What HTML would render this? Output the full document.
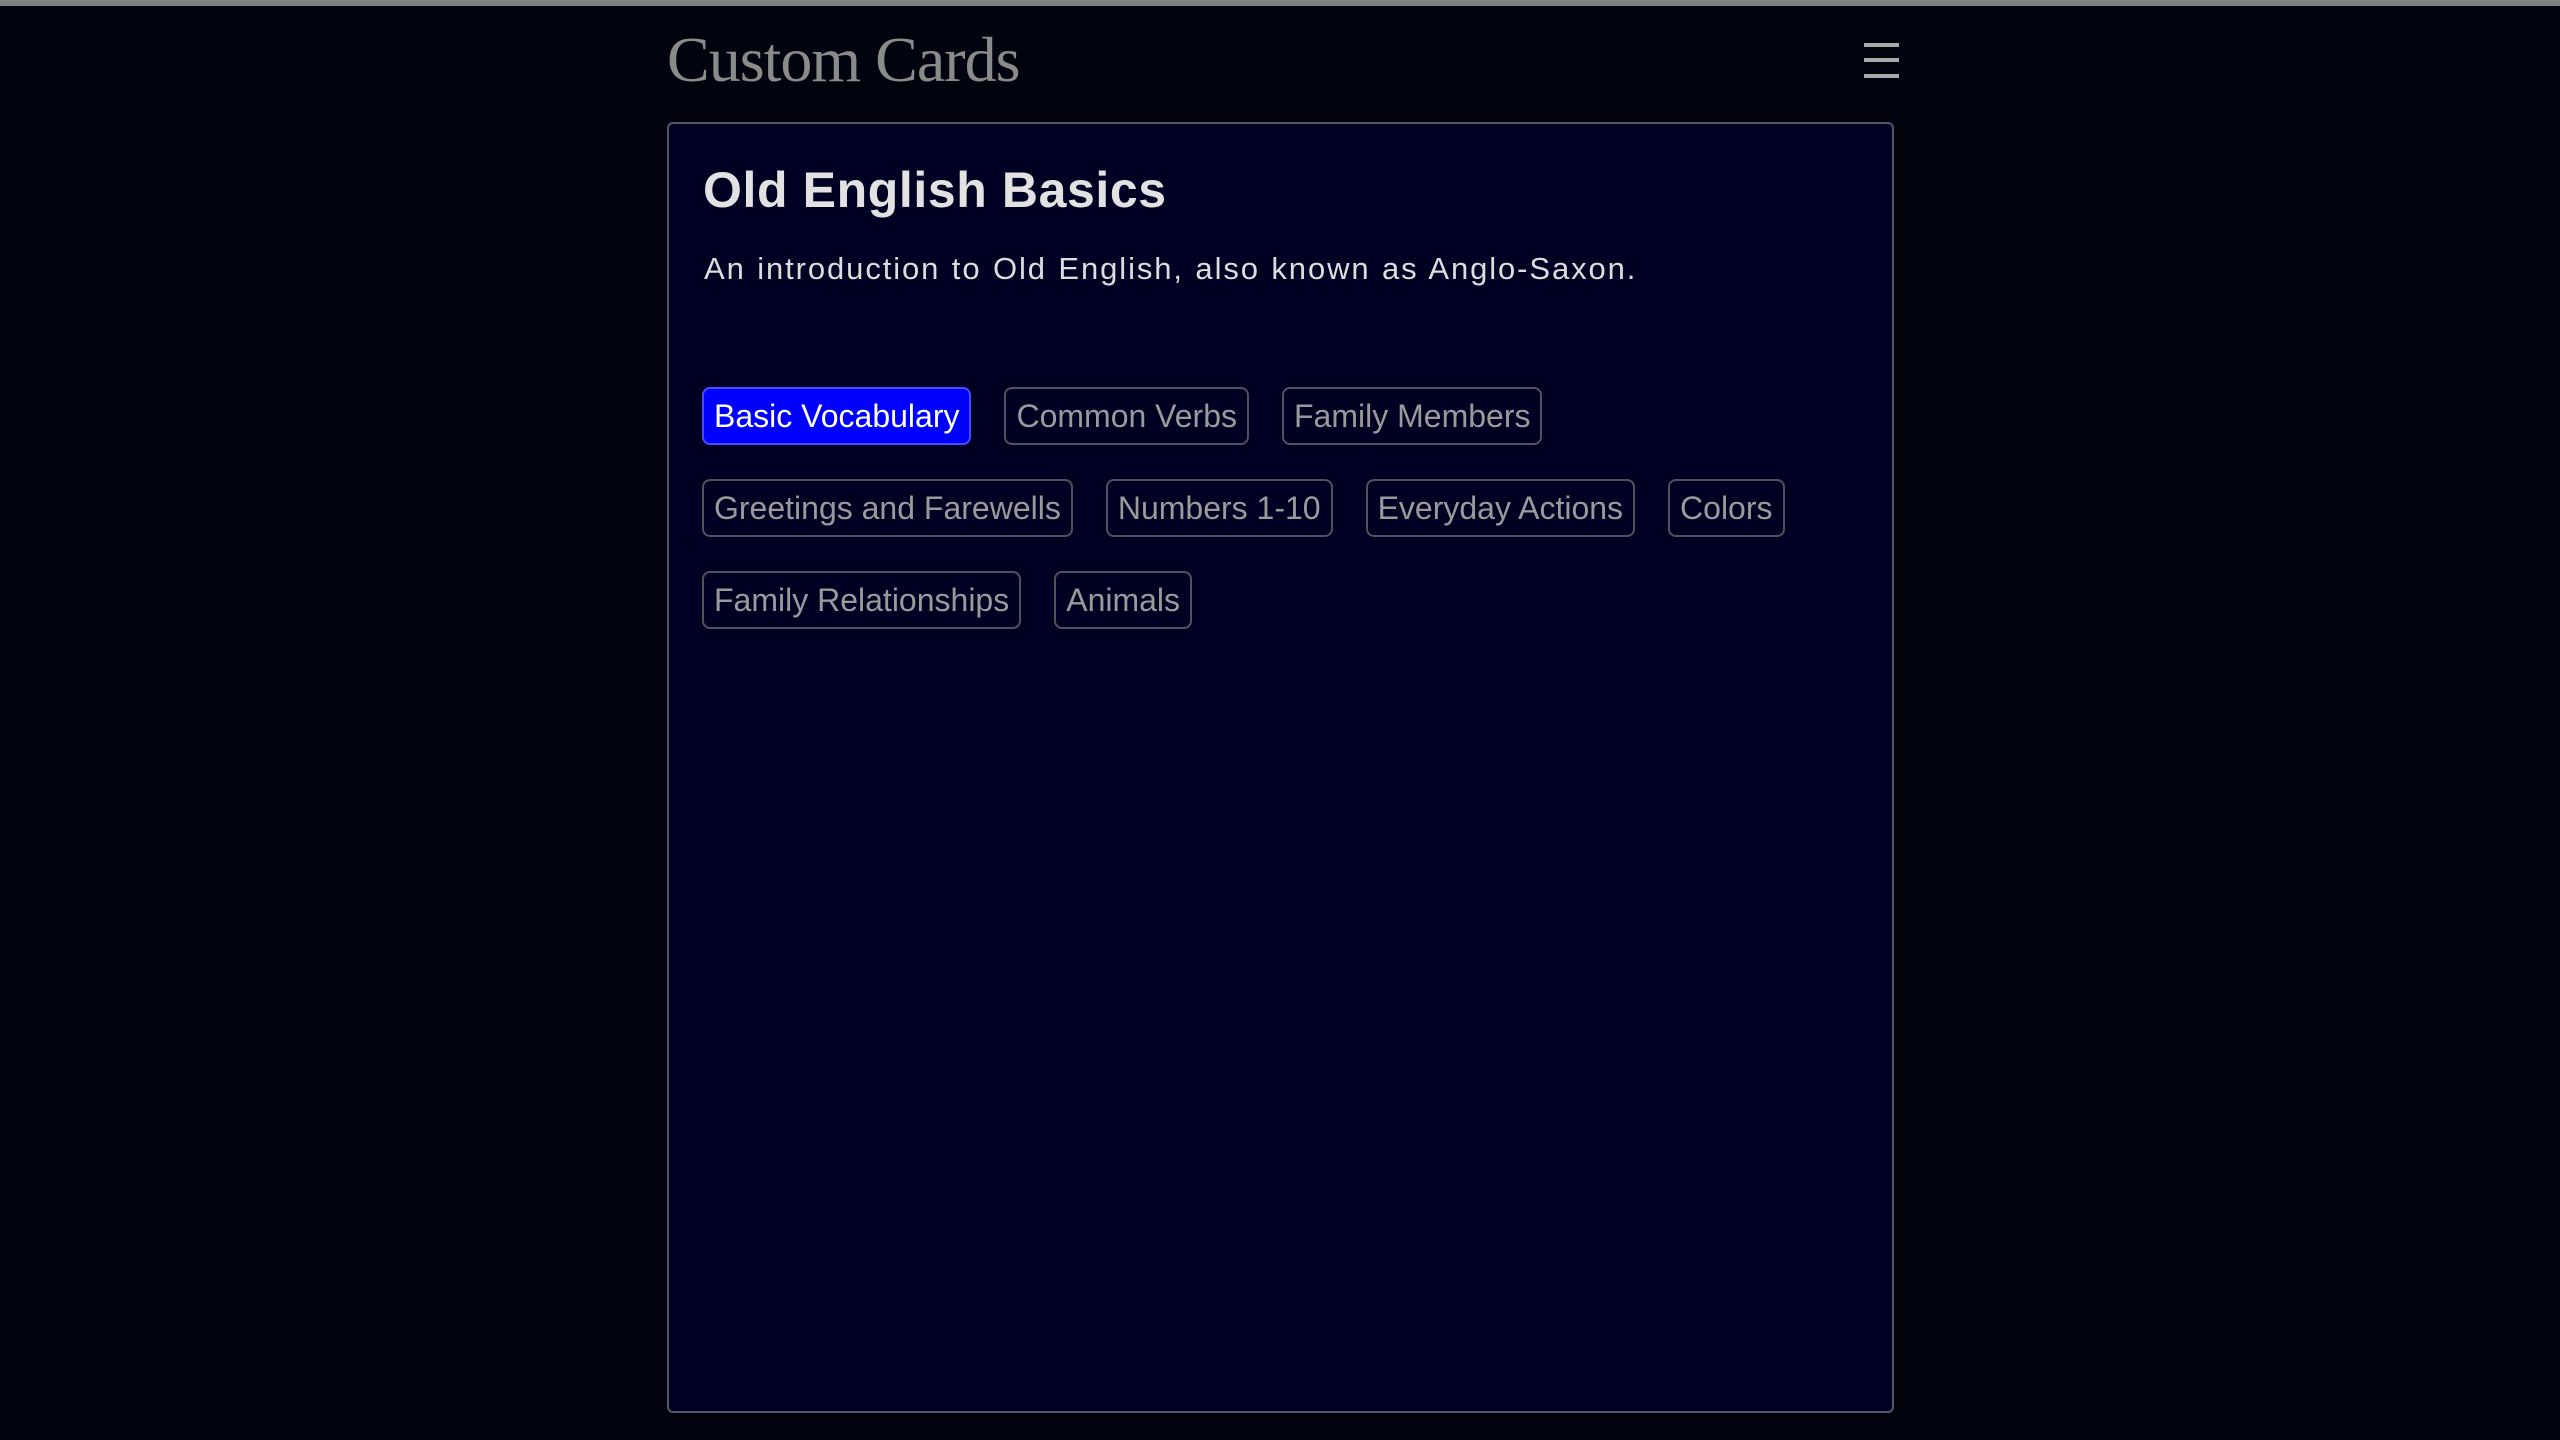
<!DOCTYPE html>
<html><head><style>
html,body{margin:0;padding:0}
body{width:2560px;height:1440px;background:#03030f;position:relative;overflow:hidden;font-family:"Liberation Sans",sans-serif}
.bar{position:absolute;left:0;top:0;width:2560px;height:6px;background:#808080}
.logo{position:absolute;left:667px;top:22px;font-family:"Liberation Serif",serif;font-size:64px;color:#8a8a8a;line-height:76px;letter-spacing:-1px}
.ham{position:absolute;left:1864px;top:43px;width:35px;height:35px}
.ham i{position:absolute;left:0;width:35px;height:4px;background:#aaa}
.card{position:absolute;left:667px;top:122px;width:1227px;height:1291px;border:2px solid #555566;border-radius:6px;background:#000022;box-sizing:border-box}
h1{position:absolute;left:34px;top:36px;margin:0;font-size:50px;font-weight:bold;color:#e2e2e2;line-height:60px;letter-spacing:0.6px}
p{position:absolute;left:35px;top:125px;margin:0;font-size:31px;color:#dddddd;line-height:40px;letter-spacing:1.9px;word-spacing:1px}
.row{position:absolute;left:33px;display:flex;gap:33px}
.t{height:58px;box-sizing:border-box;border:2px solid #50505f;border-radius:8px;padding:0 10px;font-size:32px;line-height:54px;color:#9a9a9a;white-space:nowrap}
.t.a{background:#0000ff;border-color:#4a4aff;color:#fff}
</style></head><body>
<div class="bar"></div>
<div class="logo">Custom Cards</div>
<div class="ham"><i style="top:0"></i><i style="top:15px"></i><i style="top:31px"></i></div>
<div class="card">
<h1>Old English Basics</h1>
<p>An introduction to Old English, also known as Anglo-Saxon.</p>
<div class="row" style="top:263px"><div class="t a">Basic Vocabulary</div><div class="t">Common Verbs</div><div class="t">Family Members</div></div>
<div class="row" style="top:355px"><div class="t">Greetings and Farewells</div><div class="t">Numbers 1-10</div><div class="t">Everyday Actions</div><div class="t">Colors</div></div>
<div class="row" style="top:447px"><div class="t">Family Relationships</div><div class="t">Animals</div></div>
</div>
</body></html>
